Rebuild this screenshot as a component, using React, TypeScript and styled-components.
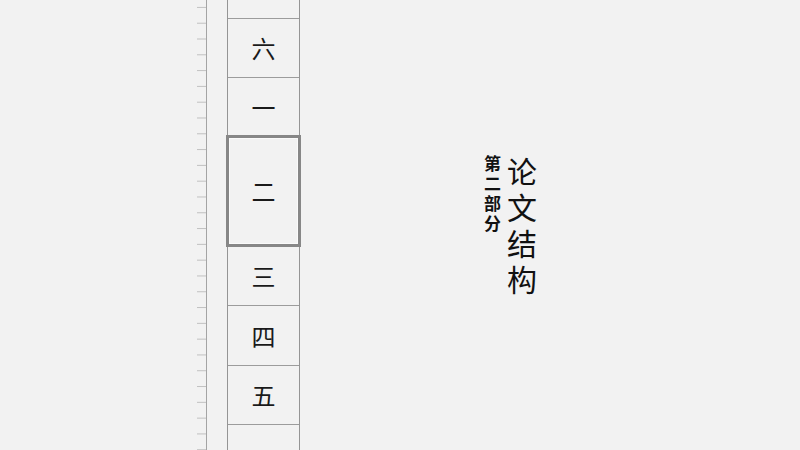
import React from 'react';
import styled, { createGlobalStyle } from 'styled-components';

const GlobalStyle = createGlobalStyle`
	html, body {
		margin: 0;
		padding: 0;
		background: #f2f2f2;
	}
	body {
		font-family: "Noto Sans CJK SC", "Noto Sans", sans-serif;
		color: #1a1a1a;
	}
`;

const cells = [
	{ label: '', height: 19 },
	{ label: '六', height: 59 },
	{ label: '一', height: 58 },
	{ label: '二', height: 112, active: true },
	{ label: '三', height: 59 },
	{ label: '四', height: 60 },
	{ label: '五', height: 59 },
	{ label: '', height: 60 },
];

export default function App() {
	return (
		<>
			<GlobalStyle />
			<Stage>
				<Ruler />
				<Column>
					{cells.map((c, i) => (
						<Cell key={i} $h={c.height} $active={c.active}>
							{c.label}
						</Cell>
					))}
				</Column>
				<TitleBox>
					<SubTitle>第二部分</SubTitle>
					<MainTitle>论文结构</MainTitle>
				</TitleBox>
			</Stage>
		</>
	);
}

const Stage = styled.div`
	width: 800px;
	height: 450px;
	overflow: hidden;
	box-sizing: border-box;
	padding-left: 197px;
	display: flex;
	align-items: stretch;
`;

const Ruler = styled.div`
	width: 9px;
	flex-shrink: 0;
	border-right: 1px solid #a4a4a4;
	background-image: linear-gradient(
		to bottom,
		transparent 0,
		transparent 7px,
		#c0c0c0 7px,
		#c0c0c0 8px,
		transparent 8px
	);
	background-size: 100% 15.8px;
	background-repeat: repeat-y;
`;

const Column = styled.div`
	margin-left: 20px;
	width: 71px;
	flex-shrink: 0;
	border-left: 1px solid #959595;
	border-right: 1px solid #959595;
	display: flex;
	flex-direction: column;
`;

const Cell = styled.div<{ $h: number; $active?: boolean }>`
	height: ${(p) => p.$h}px;
	flex-shrink: 0;
	box-sizing: border-box;
	display: flex;
	align-items: center;
	justify-content: center;
	font-size: 24px;
	line-height: 1;
	color: #1a1a1a;
	border-bottom: 1px solid #9c9c9c;
	${(p) =>
		p.$active &&
		`
		border: 3px solid #878787;
		margin: -1px -2px 0;
		box-shadow: inset 0 0 0 1px #fafafa;
	`}
`;

const TitleBox = styled.div`
	margin-left: 184px;
	margin-top: 155px;
	display: flex;
	align-items: flex-start;
	gap: 6px;
	align-self: flex-start;
`;

const SubTitle = styled.div`
	writing-mode: vertical-rl;
	font-size: 17px;
	font-weight: 700;
	letter-spacing: 3px;
	line-height: 1;
	color: #111;
`;

const MainTitle = styled.div`
	writing-mode: vertical-rl;
	font-size: 30px;
	font-weight: 400;
	letter-spacing: 6px;
	line-height: 1;
	margin-top: 2px;
	color: #111;
`;
